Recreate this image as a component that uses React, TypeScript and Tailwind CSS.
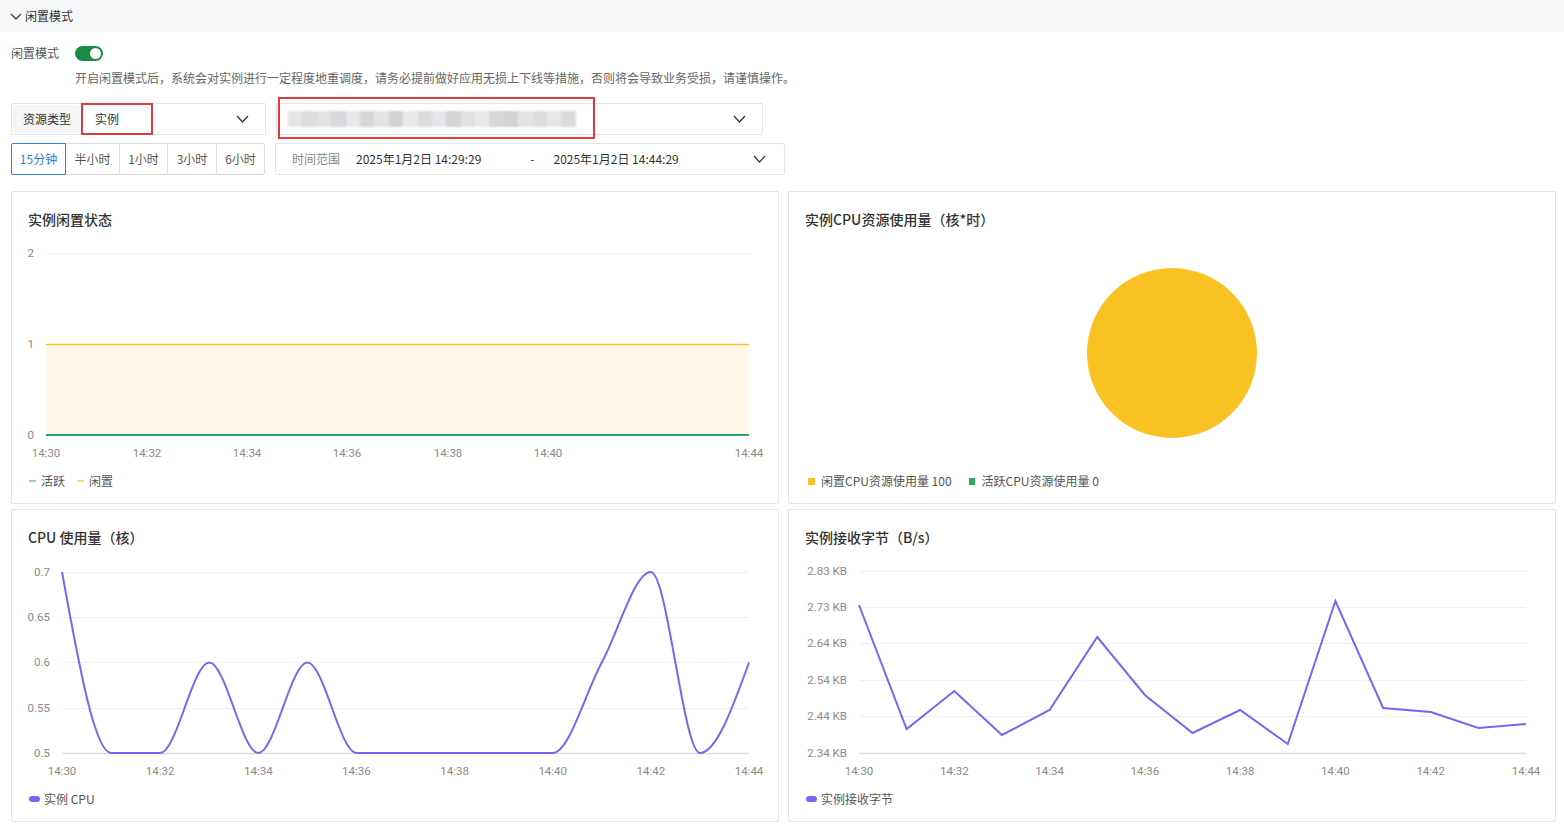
import React from "react";

const FONT = { fontFamily: '"Noto Sans CJK SC", "Noto Sans", sans-serif' };
const AXIS = { fontFamily: 'Roboto, "Liberation Sans", sans-serif', fontSize: 11.5, fill: "#8a8a8a" };

type P = [number, number];

function Chevron({ className, w = 11, h = 6 }: { className?: string; w?: number; h?: number }) {
  return (
    <svg width={w + 2} height={h + 2} viewBox={`0 0 ${w + 2} ${h + 2}`} className={className}>
      <polyline points={`1,1 ${(w + 2) / 2},${h + 1} ${w + 1},1`} fill="none" stroke="#333" strokeWidth={1.2} />
    </svg>
  );
}

function monotonePath(pts: P[]): string {
  const n = pts.length;
  const s: number[] = [];
  for (let i = 0; i < n - 1; i++) s.push((pts[i + 1][1] - pts[i][1]) / (pts[i + 1][0] - pts[i][0]));
  const m: number[] = new Array(n).fill(0);
  const sign = (v: number) => (v < 0 ? -1 : v > 0 ? 1 : 0);
  for (let i = 1; i < n - 1; i++) {
    const h0 = pts[i][0] - pts[i - 1][0];
    const h1 = pts[i + 1][0] - pts[i][0];
    const s0 = s[i - 1];
    const s1 = s[i];
    const p = (s0 * h1 + s1 * h0) / (h0 + h1);
    m[i] = (sign(s0) + sign(s1)) * Math.min(Math.abs(s0), Math.abs(s1), 0.5 * Math.abs(p)) || 0;
  }
  m[0] = (3 * s[0] - m[1]) / 2;
  m[n - 1] = (3 * s[n - 2] - m[n - 2]) / 2;
  let d = `M${pts[0][0]},${pts[0][1]}`;
  for (let i = 0; i < n - 1; i++) {
    const [x0, y0] = pts[i];
    const [x1, y1] = pts[i + 1];
    const dx = (x1 - x0) / 3;
    d += ` C${x0 + dx},${y0 + dx * m[i]} ${x1 - dx},${y1 - dx * m[i + 1]} ${x1},${y1}`;
  }
  return d;
}

function Card({ title, children, legend }: { title: string; children: React.ReactNode; legend: React.ReactNode }) {
  return (
    <div className="border border-[#e4e4e4] rounded-[2px] bg-white px-[15px] pt-[18px] pb-[14px] flex flex-col">
      <div className="h-[19px] leading-[19px] text-[14px] font-medium text-[#333] pl-[1px]">{title}</div>
      <div className="h-[236px]">{children}</div>
      <div className="mt-[8px] h-[16px] flex items-center text-[12px] text-[#555] pl-[2px]">{legend}</div>
    </div>
  );
}

function AxisText({ x, y, anchor, children }: { x: number; y: number; anchor: "end" | "middle"; children: React.ReactNode }) {
  return (
    <text x={x} y={y + 1} textAnchor={anchor} dominantBaseline="middle" style={AXIS}>
      {children}
    </text>
  );
}

function IdleChart() {
  const xs = [
    [19, "14:30"],
    [120, "14:32"],
    [220, "14:34"],
    [320, "14:36"],
    [421, "14:38"],
    [521, "14:40"],
    [722, "14:44"],
  ] as [number, string][];
  return (
    <svg width={736} height={236}>
      <line x1={19} x2={722} y1={24.5} y2={24.5} stroke="#efefef" />
      <rect x={19} y={115} width={703} height={91} fill="#fff7e8" />
      <line x1={19} x2={722} y1={115.5} y2={115.5} stroke="#f6c02c" strokeWidth={1.5} />
      <line x1={19} x2={722} y1={206} y2={206} stroke="#2ba663" strokeWidth={2} />
      {[
        [24, "2"],
        [115, "1"],
        [206, "0"],
      ].map(([y, t]) => (
        <AxisText key={t as string} x={7} y={y as number} anchor="end">
          {t}
        </AxisText>
      ))}
      {xs.map(([x, t]) => (
        <AxisText key={t} x={x} y={224} anchor="middle">
          {t}
        </AxisText>
      ))}
    </svg>
  );
}

function PieChart() {
  return (
    <svg width={736} height={236}>
      <circle cx={368} cy={124} r={85} fill="#f9c222" />
    </svg>
  );
}

function CpuChart() {
  const vals = [0.7, 0.5, 0.5, 0.6, 0.5, 0.6, 0.5, 0.5, 0.5, 0.5, 0.5, 0.6, 0.7, 0.5, 0.6];
  const step = (722 - 35) / 14;
  const pts: P[] = vals.map((v, i) => [35 + i * step, 206 - ((v - 0.5) / 0.2) * 181]);
  const ys: [number, string][] = [
    [25, "0.7"],
    [70, "0.65"],
    [115, "0.6"],
    [161, "0.55"],
    [206, "0.5"],
  ];
  const xl = ["14:30", "14:32", "14:34", "14:36", "14:38", "14:40", "14:42", "14:44"];
  return (
    <svg width={736} height={236}>
      {ys.map(([y, t], i) => (
        <g key={t}>
          <line x1={35} x2={722} y1={y + 0.5} y2={y + 0.5} stroke={i === 4 ? "#dedede" : "#efefef"} strokeWidth={i === 4 ? 1.5 : 1} />
          <AxisText x={23} y={y} anchor="end">
            {t}
          </AxisText>
        </g>
      ))}
      {xl.map((t, i) => (
        <AxisText key={t} x={35 + i * step * 2} y={224} anchor="middle">
          {t}
        </AxisText>
      ))}
      <path d={monotonePath(pts)} fill="none" stroke="#7567f3" strokeWidth={2} />
    </svg>
  );
}

function BytesChart() {
  const yv = [58, 182, 144, 188, 163, 90, 148, 186, 163, 197, 54, 161, 165, 181, 177];
  const step = (722 - 55) / 14;
  const pts = yv.map((y, i) => `${55 + i * step},${y}`).join(" ");
  const ys: [number, string][] = [
    [24, "2.83 KB"],
    [60, "2.73 KB"],
    [96, "2.64 KB"],
    [133, "2.54 KB"],
    [169, "2.44 KB"],
    [206, "2.34 KB"],
  ];
  const xl = ["14:30", "14:32", "14:34", "14:36", "14:38", "14:40", "14:42", "14:44"];
  return (
    <svg width={736} height={236}>
      {ys.map(([y, t], i) => (
        <g key={t}>
          <line x1={55} x2={722} y1={y + 0.5} y2={y + 0.5} stroke={i === 5 ? "#dedede" : "#efefef"} strokeWidth={i === 5 ? 1.5 : 1} />
          <AxisText x={43} y={y} anchor="end">
            {t}
          </AxisText>
        </g>
      ))}
      {xl.map((t, i) => (
        <AxisText key={t} x={55 + i * step * 2} y={224} anchor="middle">
          {t}
        </AxisText>
      ))}
      <polyline points={pts} fill="none" stroke="#7567f3" strokeWidth={2} strokeLinejoin="miter" />
    </svg>
  );
}

const blurColors = [
  "#e6e6e6", "#dcdcdc", "#e2e2e2", "#d8d8dc", "#e9e9e9", "#d6d6d6", "#e4e4e4", "#d2d2d6", "#e8e8e8",
  "#dadada", "#e6e6ea", "#d4d4d4", "#e0e0e0", "#e9e9ec", "#d7d7d7", "#d3d3d3", "#e3e3e3", "#dcdcdc", "#e7e7e7", "#dadada",
];

export default function App() {
  return (
    <div className="w-[1564px] min-h-[828px] bg-white text-[#333]" style={FONT}>
      <div className="h-[32px] bg-[#f6f7f9] flex items-center pl-[10px] text-[12px] text-[#333]">
        <Chevron w={10} h={5} />
        <span className="ml-[3px]">闲置模式</span>
      </div>

      <div className="pl-[11px] pr-[8px]">
        <div className="mt-[12px] h-[18px] flex items-center text-[12px]">
          <span className="w-[64px] text-[#555]">闲置模式</span>
          <div className="w-[28px] h-[15px] rounded-full bg-[#178a43] flex items-center justify-end pr-[2px]">
            <div className="w-[11px] h-[11px] rounded-full bg-white" />
          </div>
        </div>
        <div className="mt-[7px] pl-[64px] h-[18px] leading-[18px] text-[12px] text-[#666]">
          开启闲置模式后，系统会对实例进行一定程度地重调度，请务必提前做好应用无损上下线等措施，否则将会导致业务受损，请谨慎操作。
        </div>

        <div className="mt-[16px] h-[32px] flex items-stretch">
          <div className="relative w-[255px] border border-[#e4e4e4] rounded-[2px] flex items-center text-[12px]">
            <div className="h-[28px] ml-[1px] w-[67px] bg-[#f5f5f5] rounded-[2px] flex items-center pl-[10px] text-[#333]">资源类型</div>
            <span className="ml-[15px] text-[#333]">实例</span>
            <Chevron className="ml-auto mr-[16px]" />
            <div className="absolute left-[69px] top-[-1px] w-[72px] h-[32px] border-2 border-[#e0393e]" />
          </div>
          <div className="relative ml-[10px] w-[487px] border border-[#e4e4e4] rounded-[2px] flex items-center">
            <div className="ml-[11px] flex h-[16px] blur-[1px]">
              {blurColors.map((c, i) => (
                <div key={i} className="w-[14.4px] h-full" style={{ backgroundColor: c }} />
              ))}
            </div>
            <Chevron className="ml-auto mr-[16px]" />
            <div className="absolute left-[1px] top-[-7px] w-[317px] h-[42px] border-2 border-[#e0393e]" />
          </div>
        </div>

        <div className="mt-[8px] h-[32px] flex items-stretch text-[12px]">
          <div className="flex">
            <div className="w-[55px] border border-[#2f7fd6] rounded-l-[2px] flex items-center justify-center text-[#2f7fd6] z-10">15分钟</div>
            <div className="w-[55px] -ml-px border border-[#dcdcdc] flex items-center justify-center text-[#555]">半小时</div>
            <div className="w-[49px] -ml-px border border-[#dcdcdc] flex items-center justify-center text-[#555]">1小时</div>
            <div className="w-[50px] -ml-px border border-[#dcdcdc] flex items-center justify-center text-[#555]">3小时</div>
            <div className="w-[49px] -ml-px border border-[#dcdcdc] rounded-r-[2px] flex items-center justify-center text-[#555]">6小时</div>
          </div>
          <div className="ml-[10px] w-[510px] border border-[#e4e4e4] rounded-[2px] flex items-center pl-[16px] text-[12px]">
            <span className="text-[#888]">时间范围</span>
            <span className="ml-[16px] text-[#333]">2025年1月2日 14:29:29</span>
            <span className="ml-[49px] text-[#333]">-</span>
            <span className="ml-[19px] text-[#333]">2025年1月2日 14:44:29</span>
            <Chevron className="ml-auto mr-[18px]" />
          </div>
        </div>

        <div className="mt-[16px] grid grid-cols-2 gap-x-[9px] gap-y-[5px]">
          <Card
            title="实例闲置状态"
            legend={
              <>
                <span className="w-[7px] h-[2px] bg-[#8fd6ae]" />
                <span className="ml-[5px]">活跃</span>
                <span className="ml-[12px] w-[7px] h-[2px] bg-[#f7da88]" />
                <span className="ml-[5px]">闲置</span>
              </>
            }
          >
            <IdleChart />
          </Card>
          <Card
            title="实例CPU资源使用量（核*时）"
            legend={
              <>
                <span className="ml-[2px] w-[7px] h-[7px] bg-[#f8c223]" />
                <span className="ml-[6px]">闲置CPU资源使用量 100</span>
                <span className="ml-[17px] w-[6px] h-[7px] bg-[#28ad62]" />
                <span className="ml-[7px]">活跃CPU资源使用量 0</span>
              </>
            }
          >
            <PieChart />
          </Card>
          <Card
            title="CPU 使用量（核）"
            legend={
              <>
                <span className="w-[11px] h-[6px] rounded-full bg-[#7567f3]" />
                <span className="ml-[4px]">实例 CPU</span>
              </>
            }
          >
            <CpuChart />
          </Card>
          <Card
            title="实例接收字节（B/s）"
            legend={
              <>
                <span className="w-[11px] h-[6px] rounded-full bg-[#7567f3]" />
                <span className="ml-[4px]">实例接收字节</span>
              </>
            }
          >
            <BytesChart />
          </Card>
        </div>
      </div>
    </div>
  );
}
